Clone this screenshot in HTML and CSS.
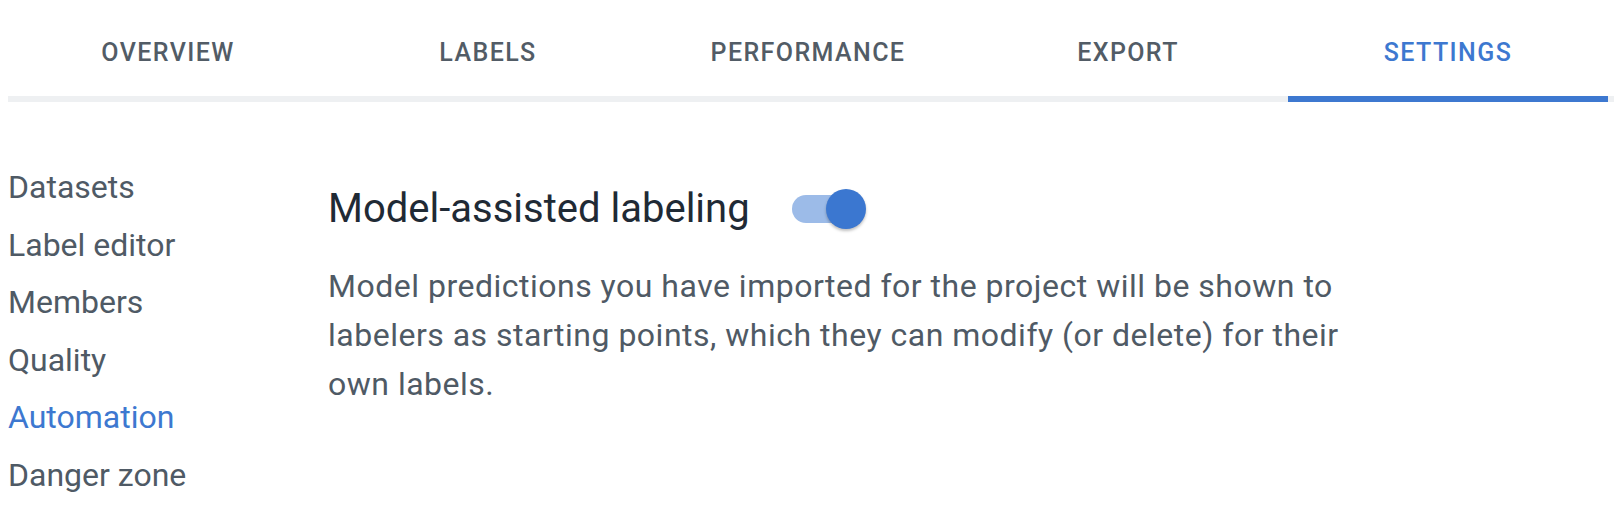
FILE: index.html
```html
<!DOCTYPE html>
<html lang="en">
<head>
<meta charset="utf-8">
<title>Settings</title>
<link rel="stylesheet" href="styles.css">
</head>
<body>
<nav class="tabs">
  <div class="tab">OVERVIEW</div>
  <div class="tab">LABELS</div>
  <div class="tab">PERFORMANCE</div>
  <div class="tab">EXPORT</div>
  <div class="tab active">SETTINGS</div>
</nav>
<div class="page">
  <ul class="sidenav">
    <li>Datasets</li>
    <li>Label editor</li>
    <li>Members</li>
    <li>Quality</li>
    <li class="current">Automation</li>
    <li>Danger zone</li>
  </ul>
  <main class="content">
    <div class="title-row">
      <h1 class="title">Model-assisted labeling</h1>
      <div class="switch on"><span class="track"></span><span class="thumb"></span></div>
    </div>
    <p class="desc">Model predictions you have imported for the project will be shown to labelers as starting points, which they can modify (or delete) for their own labels.</p>
  </main>
</div>
</body>
</html>
```

FILE: styles.css
```css
html, body {
  margin: 0;
  padding: 0;
  background: #ffffff;
}
body {
  margin: 8px;
  font-family: Roboto, "Liberation Sans", Arial, sans-serif;
}
.tabs {
  display: flex;
  border-bottom: 6px solid #eef0f2;
  margin-top: -8px;
  padding-top: 8px;
}
.tab {
  width: 320px;
  height: 88px;
  display: flex;
  align-items: center;
  justify-content: center;
  font-size: 25px;
  font-weight: 500;
  letter-spacing: 1.4px;
  color: #525c66;
  position: relative;
}
.tab.active {
  color: #3d78d0;
}
.tab.active::after {
  content: "";
  position: absolute;
  left: 0;
  right: 0;
  bottom: -6px;
  height: 6px;
  background: #3d78d0;
}
.page {
  display: flex;
  margin-top: 57px;
}
.sidenav {
  list-style: none;
  margin: 0;
  padding: 0;
  width: 320px;
  flex: none;
}
.sidenav li {
  font-size: 32px;
  line-height: 57.6px;
  color: #4f5a65;
}
.sidenav li.current {
  color: #3d78d0;
}
.content {
  padding-top: 26px;
}
.title-row {
  display: flex;
  align-items: center;
  gap: 42px;
}
.title {
  margin: 0;
  font-size: 40px;
  font-weight: 400;
  line-height: 47px;
  color: #1f2a35;
}
.switch {
  position: relative;
  width: 74px;
  height: 40px;
  flex: none;
}
.switch .track {
  position: absolute;
  left: 0;
  top: 6px;
  width: 72px;
  height: 28px;
  border-radius: 14px;
  background: #9cbbe8;
}
.switch .thumb {
  position: absolute;
  right: 0;
  top: 0;
  width: 40px;
  height: 40px;
  border-radius: 50%;
  background: #3b77d0;
  box-shadow: 0 2px 3px rgba(0, 0, 0, 0.25);
}
.desc {
  margin: 30px 0 0;
  width: 1035px;
  font-size: 32px;
  letter-spacing: 0.5px;
  line-height: 49px;
  color: #4f5a65;
}
```
